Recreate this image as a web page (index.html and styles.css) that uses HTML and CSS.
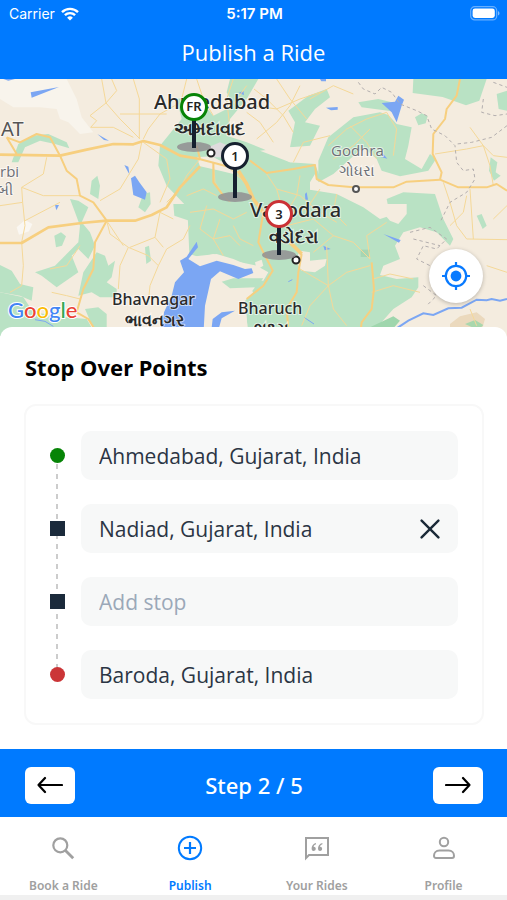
FILE: index.html
```html
<!DOCTYPE html>
<html lang="en">
<head>
  <meta charset="UTF-8" />
  <meta name="viewport" content="width=device-width, initial-scale=1.0"/>
  <title>Publish a Ride</title>
  <link rel="stylesheet" href="styles.css">
</head>
<body>

  <header class="header">
    <div class="status">
      <div class="carrier">
        <span>Carrier</span>
        <svg width="18" height="14" viewBox="0 0 18 14" fill="none" stroke="#fff" stroke-width="2.4">
          <path d="M1 5.2a11.4 11.4 0 0 1 16 0"/>
          <path d="M3.9 8.2a7.3 7.3 0 0 1 10.2 0"/>
          <path d="M9 13.6 6.1 10.7a4.1 4.1 0 0 1 5.8 0z" fill="#fff" stroke="none"/>
        </svg>
      </div>
      <span class="clock">5:17 PM</span>
      <div class="battery">
        <svg width="30" height="15" viewBox="0 0 30 15">
          <rect x="0.7" y="0.7" width="26" height="13.2" rx="4" fill="none" stroke="#fff" stroke-opacity=".4" stroke-width="1.2"/>
          <rect x="2.6" y="2.6" width="22.2" height="9.4" rx="2.4" fill="#fff"/>
          <path d="M28 5v4.6a2.5 2.5 0 0 0 0-4.6z" fill="#fff" fill-opacity=".5"/>
        </svg>
      </div>
    </div>
    <h1>Publish a Ride</h1>
  </header>

  <section class="map">
    <svg class="map-canvas" viewBox="0 0 507 257" preserveAspectRatio="xMidYMid slice">
      <g transform="scale(.33333)">
        <rect width="1521" height="771" fill="#f4ecdf"/>

        <!-- salt desert -->
        <path fill="#f8f4ec" d="M0 0H200L230 60 245 115 280 160 240 165 205 130 180 120 170 90 120 85 40 85 0 60z"/>
        <path fill="#faf7f2" d="M50 445l25 -22 22 12 -10 22 -30 10z"/>

        <!-- forest and farmland -->
        <g fill="#b9e2c4">
          <path d="M530 60L590 50 640 110 700 80 680 40 690 0H775L740 60 690 120 680 170 740 190 790 210 870 250 945 255 960 295 930 332 1010 345 1090 385 1140 420 1170 410 1160 360 1210 340 1305 345 1330 420 1360 480 1350 500 1310 460 1260 445 1210 460 1185 500 1200 540 1150 560 1140 588 1190 600 1255 595 1255 625 1235 655 1180 690 1140 735 1100 771H745L735 665 765 625 665 608 690 600 790 605 805 580 770 560 700 545 640 525 600 535 568 525 562 385 500 320 475 260 480 200 545 120z"/>
          <path d="M955 245L985 175 1060 115 1140 100 1165 108 1190 135 1235 145 1225 200 1215 240 1265 270 1290 225 1308 240 1285 275 1200 292 1145 275 1130 240 1090 205 1050 240 1000 285 955 310z"/>
          <path d="M865 95L925 50 980 30 990 55 945 90 915 130 960 140 930 200 870 205 885 130z"/>
          <path d="M1240 0h220l-22 65 -40 14 -70 -25 -90 -12z"/>
          <path d="M1075 70l60 -10 50 12 -10 25 -90 -12z"/>
          <path d="M1245 115l20 -12 18 8 -6 22 -22 6z"/>
          <path d="M1472 235l20 15 -5 30 15 10 -20 15 -15 -30z"/>
          <path d="M1430 410l15 -5 15 35 -12 10z"/>
          <path d="M1490 45l31 -10v60l-25 -5z"/>
          <path d="M35 250L55 195 95 170 145 165 200 190 208 208 165 195 120 185 75 205 55 250z"/>
          <path d="M275 305L292 290 300 320 295 360 270 345z"/>
          <path d="M430 345L450 340 452 375 435 400 415 385z"/>
          <path d="M210 360L235 365 265 385 245 430 270 460 285 500 265 540 235 510 215 530 235 580 170 625 125 590 105 580 165 560 205 520 235 490 240 440 225 400z"/>
          <path d="M163 470l20 -10 15 12 -12 28 -18 5z"/>
          <path d="M290 520L315 530 325 560 345 545 335 595 320 610 350 630 350 655 300 655 275 640 235 650 250 580z"/>
          <path d="M0 558L35 575 60 615 100 625 95 665 60 650 0 640z"/>
          <path d="M0 640L70 655 100 700 200 715 260 720 290 771H0z"/>
          <path d="M255 690l40 -5 25 20 0 66h-30z"/>
          <path d="M435 505l12 -5 6 45 -14 10z"/>
          <path d="M520 375h48v50l-45 -15z"/>
        </g>

        <!-- clearings inside the green areas -->
        <g fill="#f4ecdf">
          <path d="M590 235L635 232 680 255 720 265 700 285 660 275 600 262z"/>
          <path d="M885 545L900 515 930 520 930 545 980 540 975 560 945 580 905 575z"/>
          <path d="M765 550l20 -8 5 18 -20 12z"/>
          <path d="M945 285L955 310 970 330 930 332 930 310z"/>
          <path d="M780 215L870 205 945 210 945 250 870 250z"/>
          <path d="M1125 375h95v30l-25 30 -25 -10z"/>
        </g>
        <path fill="#dfdbdd" d="M625 205L660 190 685 200 685 235 640 235z"/>
        <path fill="#a6d6b3" d="M1082 512h28v22h-28z"/>
        <path fill="#9fd6ad" d="M1110 745L1180 712 1200 725 1160 771H1100z"/>
        <path fill="#ebd9bd" d="M1350 735L1380 712 1430 700 1455 720 1440 771H1350z"/>
        <path fill="#a9d7ad" d="M1395 735l30 -12 25 15 -15 15z"/>

        <!-- gulf -->
        <path fill="#f4ecdf" d="M610 771L615 680 635 600 660 580 715 605 740 620 760 640 735 665 745 771z"/>
        <path fill="#b9e2c4" d="M665 608L700 598 790 598 770 625 690 628z"/>
        <path fill="#f4ecdf" d="M565 535L600 530 650 525 700 540 765 568 755 575 700 565 650 552 600 565z"/>
        <g fill="#7ba6f3">
          <path d="M590 488L594 505 565 540 600 562 650 545 700 558 735 570 755 568 760 582 715 600 660 577 633 600 615 680 610 771H480L492 700 515 650 525 610 552 580 540 545 560 533z"/>
          <path d="M632 771L638 720 665 700 705 695 665 718 650 771z"/>
          <path d="M92 40l85 -16 -82 32z"/>
          <path d="M393 298L405 290 418 310 440 340 435 362 400 348z"/>
          <path d="M373 258l12 5 4 25z"/>
          <path d="M292 165l35 20 -15 -2z"/>
          <path d="M165 378h12l-8 16z"/>
          <path d="M715 42l15 -6 2 12z"/>
          <path d="M1145 72L1185 68 1195 50 1212 62 1205 80 1190 130 1175 100z"/>
          <path d="M978 86l35 -2v8l-20 2z"/>
          <path d="M1135 232l15 5 -3 -15 15 17z"/>
          <path d="M915 345l5 -5 4 22h-8z"/>
          <path d="M1150 465l52 18 -5 8z"/>
          <path d="M970 500l22 10 -18 4z"/>
          <path d="M10 0h35l-20 5z"/>
          <path d="M960 0h18v7h-14z"/>
        </g>
        <path fill="none" stroke="#7ba6f3" stroke-width="6" d="M1190 748L1225 725 1270 703 1300 708 1345 688 1385 686 1430 662 1460 664 1475 660 1500 665 1521 660"/>
        <path fill="none" stroke="#7ba6f3" stroke-width="3" d="M105 722l30 5 25 15M912 715l30 20M865 608l12 -6"/>

        <!-- minor roads -->
        <g fill="none" stroke="#f5d898" stroke-width="3" stroke-linejoin="round">
          <path d="M305 0L318 72 360 120 420 180M318 72L350 35 335 0M400 0L418 60V180M430 180L445 150 480 105 560 60M318 72L270 110 290 125 272 145 340 145 400 175M360 105H500M430 190L500 240 510 300 480 370M425 190L415 240 360 330 300 365"/>
          <path d="M140 235L130 285 65 325 68 370 0 380M68 370L75 440 65 490 70 560 65 620 30 640M65 325L130 350H240M180 370L75 425M240 500L200 560 150 570M155 640L200 650 240 660"/>
          <path d="M320 425L330 465 385 505 445 530 475 560 450 620 445 670M385 505L360 560 355 630M320 425L370 500M475 560L500 510 550 480 570 440M465 475L490 505M465 475L480 400 520 420M465 475L390 505"/>
          <path d="M560 0L545 60 555 110M590 0L610 60 640 110M700 0L680 60 690 150M740 20L690 90M600 240L560 290 540 330 500 370M640 250L645 310 670 350 690 370M680 260L735 310M620 380L600 450 640 480 690 470 720 500M570 400L640 390 700 420 740 400M660 420L640 480 670 530M560 350L610 330 650 350"/>
          <path d="M762 30L800 60 850 110 880 160M830 0L870 60 920 120M760 80L830 90 900 60 960 40M770 180L830 130 870 80 900 20M820 190L780 130 740 100M930 60L1000 20 1060 45M880 250L910 190 990 170M985 200L1040 150 1100 120 1160 100 1190 150 1180 230M1050 140L1100 190 1130 240M1000 240L1060 200 1110 150"/>
          <path d="M800 285L830 330 850 400M830 330L900 350 960 400 1010 430M900 290L890 350 860 400M960 330L920 390 880 400M1010 345L1000 400 1040 440M860 440L940 420 1000 470 1060 490 1110 540M1000 470L940 520M1160 430L1100 470 1110 540M985 620L900 570M985 620L1040 580 1110 560M985 620L1000 690 1040 740M985 620L930 680 905 740M980 500L985 620M1120 600L1170 585 1240 600M1115 640L1180 620 1260 640M760 500L720 480 700 440"/>
          <path d="M1305 225L1400 210 1450 200 1480 230 1521 235M1410 145L1450 200 1470 260 1480 320M1330 310L1350 370 1370 440 1400 480 1521 482M1400 350L1390 400 1350 440M1410 330L1420 480M1460 560L1521 580M1480 420L1521 380M1410 690L1430 740"/>
        </g>

        <!-- highways -->
        <g fill="none" stroke="#f7cf7f" stroke-width="6" stroke-linejoin="round">
          <path stroke-width="8" d="M0 227L180 230 260 212 340 195 400 196 430 186 480 198 540 230 600 240"/>
          <path d="M180 230L200 275 230 300 240 350 280 370 320 425M20 175L60 190 110 165 150 175 180 230M20 175L50 225"/>
          <path stroke-width="8" d="M0 492H65L145 445 245 432 320 425 405 425 455 408 500 385 540 325 600 262"/>
          <path d="M320 425L285 490 280 570 250 630 230 700 265 720 290 760M598 240L635 250 680 262M600 240L590 200M640 250V310L670 350"/>
          <path stroke-width="11" d="M715 275L740 315 760 360 790 400M870 490L905 525"/>
          <path d="M750 245L800 282 880 270 945 258 950 300 985 318 1060 325 1180 325 1220 308 1320 302 1375 325 1460 325 1490 315 1521 335"/>
          <path d="M1380 0L1370 50 1340 90 1335 120 1300 165 1298 225 1325 280 1320 302"/>
          <path d="M790 400L775 490 818 575 790 620 740 660M905 525L895 580 890 640 860 690 865 750"/>
          <path d="M1115 550L1122 630 1115 690 1085 730 1080 771"/>
        </g>

        <!-- state borders -->
        <g fill="none" stroke="#b3aeae" stroke-width="3" stroke-dasharray="10 9">
          <path d="M1075 10L1090 30 1125 45 1145 25 1175 40 1200 75 1250 95 1280 110 1295 150 1335 170 1365 200 1370 250 1390 275 1420 270 1425 300 1400 340 1350 370 1320 430"/>
          <path d="M1521 140L1475 175 1415 190 1370 195M1450 60L1445 100 1485 110 1521 105M1480 10L1521 25"/>
          <path d="M1230 460L1290 445 1340 480 1310 510 1270 500 1250 540 1290 560M1240 480L1320 500M1270 620L1310 650 1280 680"/>
        </g>
      </g>

      <g class="place">
        <text class="city" x="154" y="30">Ahmedabad</text>
        <text class="local" x="174" y="56">અમદાવાદ</text>
        <text class="city" x="250" y="138">Vadodara</text>
        <text class="local" x="269" y="164">વડોદરા</text>
        <text class="town" x="112" y="226">Bhavnagar</text>
        <text class="local small" x="125" y="247">ભાવનગર</text>
        <text class="town" x="238" y="235">Bharuch</text>
        <text class="local small" x="254" y="255">ભરૂચ</text>
        <text class="minor" x="331" y="77">Godhra</text>
        <text class="minor-local" x="339" y="97">ગોધરા</text>
        <text class="minor" x="0" y="98">rbi</text>
        <text class="minor-local" x="-3" y="116">બી</text>
        <text class="region" x="1" y="57">AT</text>
      </g>

      <g fill="#fff" stroke="#222" stroke-width="2">
        <circle cx="211" cy="74" r="3.5"/>
        <circle cx="296" cy="181" r="3.5"/>
        <circle cx="356" cy="110" r="3" stroke="#555"/>
      </g>

      <text class="google" x="8" y="239"><tspan fill="#4285f4">G</tspan><tspan fill="#ea4335">o</tspan><tspan fill="#fbbc05">o</tspan><tspan fill="#4285f4">g</tspan><tspan fill="#34a853">l</tspan><tspan fill="#ea4335">e</tspan></text>

      <g class="pin">
        <ellipse cx="194" cy="68" rx="17" ry="5"/>
        <path d="M194 40v29"/>
        <circle cx="194" cy="28" r="12.5" stroke="#078407"/>
        <text x="194" y="32">FR</text>
      </g>
      <g class="pin">
        <ellipse cx="235" cy="118" rx="17" ry="5"/>
        <path d="M235 90v29"/>
        <circle cx="235" cy="77" r="12.5" stroke="#16202f"/>
        <text x="235" y="82">1</text>
      </g>
      <g class="pin">
        <ellipse cx="279" cy="176" rx="17" ry="5"/>
        <path d="M279 148v28"/>
        <circle cx="279" cy="135" r="12.5" stroke="#cb3135"/>
        <text x="279" y="140">3</text>
      </g>
    </svg>

    <button class="locate" aria-label="My location">
      <svg width="30" height="30" viewBox="0 0 30 30" fill="none" stroke="#087aff" stroke-width="2.2">
        <circle cx="15" cy="15" r="10.2"/>
        <circle cx="15" cy="15" r="5.4" fill="#087aff" stroke="none"/>
        <path d="M15 1v4M15 25v4M1 15h4M25 15h4"/>
      </svg>
    </button>
  </section>

  <main class="sheet">
    <h2>Stop Over Points</h2>

    <ul class="stops">
      <li class="stop">
        <span class="marker start"></span>
        <div class="field"><input type="text" value="Ahmedabad, Gujarat, India" aria-label="From" /></div>
      </li>
      <li class="stop">
        <span class="marker"></span>
        <div class="field">
          <input type="text" value="Nadiad, Gujarat, India" aria-label="Stop 1" />
          <button class="remove" aria-label="Remove stop">
            <svg width="20" height="20" viewBox="0 0 20 20" fill="none" stroke="#1b2a38" stroke-width="2.4" stroke-linecap="round">
              <path d="M1.6 1.6l16.8 16.8M18.4 1.6L1.6 18.4"/>
            </svg>
          </button>
        </div>
      </li>
      <li class="stop">
        <span class="marker"></span>
        <div class="field"><input type="text" placeholder="Add stop" aria-label="Stop 2" /></div>
      </li>
      <li class="stop">
        <span class="marker end"></span>
        <div class="field"><input type="text" value="Baroda, Gujarat, India" aria-label="To" /></div>
      </li>
    </ul>
  </main>

  <div class="steps">
    <button aria-label="Previous step">
      <svg width="26" height="18" viewBox="0 0 26 18" fill="none" stroke="#000" stroke-width="2.2" stroke-linecap="round" stroke-linejoin="round">
        <path d="M25 9H1.5M8 2L1.5 9 8 16"/>
      </svg>
    </button>
    <span>Step 2 / 5</span>
    <button aria-label="Next step">
      <svg width="26" height="18" viewBox="0 0 26 18" fill="none" stroke="#000" stroke-width="2.2" stroke-linecap="round" stroke-linejoin="round">
        <path d="M1 9h23.5M18 2l6.5 7L18 16"/>
      </svg>
    </button>
  </div>

  <nav class="tabs">
    <a href="#">
      <svg width="26" height="26" viewBox="0 0 26 26" fill="none" stroke="currentColor" stroke-width="2.2">
        <circle cx="10.3" cy="10.3" r="7"/>
        <path d="M15.2 15.2l8 8" stroke-width="2.8"/>
      </svg>
      <span>Book a Ride</span>
    </a>
    <a href="#" class="active">
      <svg width="26" height="26" viewBox="0 0 26 26" fill="none" stroke="currentColor" stroke-width="2">
        <circle cx="13" cy="13" r="11.2"/>
        <path d="M13 7v12M7 13h12" stroke-width="2.2"/>
      </svg>
      <span>Publish</span>
    </a>
    <a href="#">
      <svg width="26" height="26" viewBox="0 0 26 26" fill="none" stroke="currentColor" stroke-width="2">
        <path d="M2 23V3h22v17H5z"/>
        <g fill="currentColor" stroke="none">
          <path d="M12 8c-3 .7-4.6 3-4.4 6a2.1 2.1 0 1 0 2-2.2c.1-1.4.9-2.2 2.4-2.6z"/>
          <path d="M18.4 8c-3 .7-4.6 3-4.4 6a2.1 2.1 0 1 0 2-2.2c.1-1.4.9-2.2 2.4-2.6z"/>
        </g>
      </svg>
      <span>Your Rides</span>
    </a>
    <a href="#">
      <svg width="26" height="26" viewBox="0 0 26 26" fill="none" stroke="currentColor" stroke-width="2">
        <circle cx="13" cy="7" r="4.2"/>
        <path d="M8.5 15.6h9c3.600 0 5.500 2.400 5.500 5.200 0 1.400-.7 2.200-2 2.200H5c-1.300 0-2-.8-2-2.200 0-2.800 1.900-5.200 5.500-5.200z"/>
      </svg>
      <span>Profile</span>
    </a>
  </nav>

</body>
</html>
```

FILE: styles.css
```css
* {
  box-sizing: border-box;
}

body {
  margin: 0;
  min-height: 100vh;
  display: flex;
  flex-direction: column;
  font-family: 'Noto Sans', 'Open Sans', sans-serif;
  background: #f0f0f0;
  color: #000;
}

button {
  border: none;
  padding: 0;
  cursor: pointer;
  display: flex;
  align-items: center;
  justify-content: center;
}

.header {
  background: #007aff;
  color: #fff;
  padding-bottom: 10px;
}

.status {
  display: grid;
  grid-template-columns: 1fr auto 1fr;
  align-items: center;
  height: 27px;
  padding: 0 7px 0 9px;
  font-family: Inter, sans-serif;
  font-size: 14px;
}

.carrier {
  display: flex;
  align-items: center;
  gap: 6px;
}

.clock {
  font-size: 15px;
  font-weight: 600;
}

.battery {
  display: flex;
  justify-content: flex-end;
}

h1 {
  margin: 0;
  font-family: 'Open Sans', sans-serif;
  font-size: 22px;
  font-weight: 400;
  line-height: 42px;
  padding-top: 4px;
  height: 42px;
  text-align: center;
}

.map {
  position: relative;
  height: 257px;
}

.map-canvas {
  display: block;
  width: 100%;
  height: 100%;
}

.place text {
  paint-order: stroke;
  stroke: #fff;
  stroke-opacity: 0.6;
  stroke-width: 2px;
  fill: #2a2a2a;
  font-weight: 500;
}

.place .city {
  font-size: 20px;
}

.place .local {
  font-size: 18px;
  font-weight: 700;
}

.place .town {
  font-size: 16px;
}

.place .small {
  font-size: 16px;
}

.place .minor {
  font-family: 'Open Sans', sans-serif;
  font-size: 15px;
  font-weight: 400;
  fill: #6e7076;
}

.place .minor-local {
  font-size: 15px;
  font-weight: 400;
  fill: #6e7076;
}

.place .region {
  font-size: 20px;
  font-weight: 400;
  fill: #555;
}

.google {
  font-family: Lato, sans-serif;
  font-size: 22px;
  font-weight: 500;
  paint-order: stroke;
  stroke: #fff;
  stroke-width: 2px;
}

.pin ellipse {
  fill: #8e8a8e;
  fill-opacity: 0.8;
}

.pin path {
  stroke: #16202f;
  stroke-width: 4px;
}

.pin circle {
  fill: #fff;
  stroke-width: 3px;
}

.pin text {
  font-size: 13px;
  font-weight: 600;
  text-anchor: middle;
  fill: #222;
}

.locate {
  position: absolute;
  right: 24px;
  bottom: 33px;
  width: 54px;
  height: 54px;
  border-radius: 50%;
  background: #fff;
  box-shadow: 0 1px 4px rgba(0, 0, 0, 0.25);
}

.sheet {
  position: relative;
  margin-top: -9px;
  padding: 24px 23px 24px 24px;
  background: #fff;
  border-radius: 12px 12px 0 0;
}

h2 {
  margin: 0 0 21px 1px;
  font-size: 22px;
  line-height: 32px;
  font-weight: 700;
}

.stops {
  position: relative;
  margin: 0;
  padding: 25px 24px 24px;
  list-style: none;
  border: 2px solid #f8f8f8;
  border-radius: 12px;
  display: flex;
  flex-direction: column;
  gap: 24px;
}

/* dashed line behind the markers */
.stops::before {
  content: '';
  position: absolute;
  left: 30px;
  top: 48px;
  bottom: 48px;
  width: 2px;
  background: repeating-linear-gradient(#ccc 0 5px, transparent 5px 10px);
}

.stop {
  display: flex;
  align-items: center;
  gap: 16px;
}

.marker {
  position: relative;
  flex: none;
  width: 15px;
  height: 15px;
  background: #1b2a3b;
}

.marker.start {
  background: #078407;
  border-radius: 50%;
}

.marker.end {
  background: #cb3537;
  border-radius: 50%;
}

.field {
  flex: 1;
  display: flex;
  align-items: center;
  height: 49px;
  padding: 0 18px;
  background: #f7f8f8;
  border-radius: 10px;
}

.field input {
  flex: 1;
  min-width: 0;
  padding: 0;
  border: none;
  outline: none;
  background: none;
  font-family: 'Open Sans', sans-serif;
  font-size: 21px;
  color: #2b3544;
}

.field input::placeholder {
  color: #9ba8b8;
}

.remove {
  background: none;
}

.steps {
  display: flex;
  align-items: center;
  justify-content: space-between;
  height: 68px;
  padding: 4px 24px 0 25px;
  background: #007aff;
  color: #fff;
  font-size: 22px;
  font-weight: 500;
}

.steps button {
  width: 50px;
  height: 37px;
  border-radius: 6px;
  background: #fff;
}

.tabs {
  display: grid;
  grid-template-columns: repeat(4, 1fr);
  height: 78px;
  padding-top: 18px;
  background: #fff;
}

.tabs a {
  display: flex;
  flex-direction: column;
  align-items: center;
  gap: 16px;
  color: #a0a0a0;
  font-size: 12px;
  font-weight: 600;
  line-height: 18px;
  text-decoration: none;
}

.tabs .active {
  color: #007aff;
}
```
